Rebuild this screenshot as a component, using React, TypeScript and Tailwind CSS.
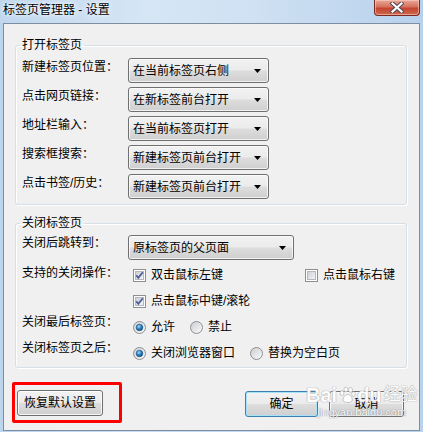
import React from "react";

const Arrow = () => (
  <svg width="7" height="4" viewBox="0 0 7 4" className="shrink-0">
    <path d="M0 0 H7 L3.5 4 Z" fill="#000" />
  </svg>
);

const Combo = ({ text, w }: { text: string; w: string }) => (
  <div
    className={`${w} h-[25px] shrink-0 flex items-center justify-between pl-[4px] pr-[7px] rounded-[3px] border border-[#707070] bg-[linear-gradient(#f2f2f2_0%,#ebebeb_48%,#dddddd_52%,#cfcfcf_100%)] shadow-[inset_0_0_0_1px_rgba(255,255,255,0.7)]`}
  >
    <span className="text-[12px] leading-[16px] text-black">{text}</span>
    <Arrow />
  </div>
);

const Check = ({ checked }: { checked: boolean }) => (
  <svg width="13" height="13" viewBox="0 0 13 13" className="shrink-0">
    <defs>
      <linearGradient id="cbg" x1="0" y1="0" x2="1" y2="1">
        <stop offset="0" stopColor="#cbcfd5" />
        <stop offset="1" stopColor="#f6f6f6" />
      </linearGradient>
    </defs>
    <rect x="0.5" y="0.5" width="12" height="12" fill="#fff" stroke="#8e8f8f" />
    <rect x="2.5" y="2.5" width="8" height="8" fill="url(#cbg)" stroke="#b4b8be" />
    {checked && (
      <path d="M3.2 6.2 L5.3 8.8 L9.8 3.2" fill="none" stroke="#4a5f97" strokeWidth="1.8" />
    )}
  </svg>
);

const Radio = ({ on }: { on: boolean }) => (
  <svg width="13" height="13" viewBox="0 0 13 13" className="shrink-0">
    <defs>
      <linearGradient id="rbg" x1="0" y1="0" x2="1" y2="1">
        <stop offset="0" stopColor="#c9cdd3" />
        <stop offset="1" stopColor="#fbfbfb" />
      </linearGradient>
      <radialGradient id="rdot" cx="0.4" cy="0.35" r="0.7">
        <stop offset="0" stopColor="#a6dcf7" />
        <stop offset="0.5" stopColor="#2d86c5" />
        <stop offset="1" stopColor="#0d3f74" />
      </radialGradient>
    </defs>
    <circle cx="6.5" cy="6.5" r="6" fill="url(#rbg)" stroke="#8e8f8f" />
    {on && <circle cx="6.5" cy="6.5" r="3.3" fill="url(#rdot)" stroke="#1c4f86" strokeWidth="0.6" />}
  </svg>
);

const Btn = ({ text, w, def }: { text: string; w: string; def?: boolean }) => (
  <div
    className={`${w} h-[26px] flex items-center justify-center rounded-[3px] border ${
      def
        ? "border-[#3c7fb1] shadow-[inset_0_0_0_1px_#a8e2f9]"
        : "border-[#707070] shadow-[inset_0_0_0_1px_rgba(255,255,255,0.8)]"
    } bg-[linear-gradient(#f2f2f2_0%,#ebebeb_48%,#dddddd_52%,#cfcfcf_100%)] text-[12px] leading-[16px] text-black`}
  >
    {text}
  </div>
);

const Label = ({ text, pt }: { text: string; pt?: string }) => (
  <div className={`w-[106px] shrink-0 text-[12px] leading-[16px] text-black ${pt ?? "pt-[1px]"}`}>{text}</div>
);

const groupCls =
  "border border-[#d5dfe5] rounded-[3px] shadow-[inset_1px_1px_0_#fff,1px_1px_0_#fff] pl-[6px] pr-[6px] m-0 min-w-0";
const legendCls = "text-[12px] leading-[16px] text-black px-[2px] -ml-[2px]";

export default function App() {
  const rows1: [string, string][] = [
    ["新建标签页位置：", "在当前标签页右侧"],
    ["点击网页链接：", "在新标签前台打开"],
    ["地址栏输入：", "在当前标签页打开"],
    ["搜索框搜索：", "新建标签页前台打开"],
    ["点击书签/历史：", "新建标签页前台打开"],
  ];
  return (
    <div className="relative w-[423px] h-[432px] overflow-hidden bg-[linear-gradient(90deg,#bcd4ec_0%,#c9dcf1_30%,#c2d8ef_60%,#b9d2ec_100%)] font-['Liberation_Sans','Noto_Sans_CJK_SC',sans-serif] flex flex-col">
      {/* title bar */}
      <div className="h-[23px] shrink-0 flex items-start justify-between bg-[linear-gradient(90deg,#c0d7ee_0%,#d6e6f5_35%,#cfe1f3_60%,#b7d1ec_100%)]">
        <div className="pl-[3px] pt-[2px] text-[12px] leading-[16px] text-black [text-shadow:0_0_6px_#fff,0_0_3px_#fff]">
          标签页管理器 - 设置
        </div>
        <div className="mr-[3px] w-[46px] h-[16px] rounded-b-[4px] border border-t-0 border-[#7a2a22] bg-[linear-gradient(#eaa797_0%,#d7725f_45%,#c4432f_55%,#cf6a4f_100%)] flex items-center justify-center shadow-[inset_0_0_0_1px_rgba(255,220,210,0.5)]">
          <svg width="14" height="11" viewBox="0 0 14 11">
            <path d="M2.5 1.5 L11.5 9.5 M11.5 1.5 L2.5 9.5" stroke="#4b4b55" strokeWidth="4.2" strokeLinecap="square" />
            <path d="M2.5 1.5 L11.5 9.5 M11.5 1.5 L2.5 9.5" stroke="#fff" strokeWidth="2.2" strokeLinecap="square" />
          </svg>
        </div>
      </div>

      {/* client panel */}
      <div className="mx-[3px] h-[408px] shrink-0 border border-[#7d8ea3] bg-[#f0f0f0] flex flex-col pl-[11px] pr-[12px] pt-[13px]">
        <fieldset className={`${groupCls} pt-[5px] pb-[5px]`}>
          <legend className={legendCls}>打开标签页</legend>
          <div className="flex flex-col gap-[4px]">
            {rows1.map(([l, v]) => (
              <div key={l} className="flex items-start">
                <Label text={l} />
                <Combo text={v} w="w-[141px]" />
              </div>
            ))}
          </div>
        </fieldset>

        <fieldset className={`${groupCls} mt-[10px] pt-[4px] pb-[1px]`}>
          <legend className={legendCls}>关闭标签页</legend>
          <div className="flex items-start">
            <Label text="关闭后跳转到：" pt="pt-0" />
            <Combo text="原标签页的父页面" w="w-[166px]" />
          </div>
          <div className="mt-[2px] flex flex-col">
            <div className="h-[26px] flex items-start">
              <Label text="支持的关闭操作：" pt="pt-[3px]" />
              <div className="flex items-center h-[26px] pl-[5px]">
                <div className="w-[172px] flex items-center gap-[5px]">
                  <Check checked />
                  <span className="text-[12px] leading-[16px] text-black">双击鼠标左键</span>
                </div>
                <div className="flex items-center gap-[5px]">
                  <Check checked={false} />
                  <span className="text-[12px] leading-[16px] text-black">点击鼠标右键</span>
                </div>
              </div>
            </div>
            <div className="h-[26px] flex items-start">
              <div className="w-[106px] shrink-0" />
              <div className="flex items-center h-[26px] pl-[5px] gap-[5px]">
                <Check checked />
                <span className="text-[12px] leading-[16px] text-black">点击鼠标中键/滚轮</span>
              </div>
            </div>
            <div className="h-[26px] flex items-start">
              <Label text="关闭最后标签页：" pt="pt-0" />
              <div className="flex items-center h-[26px] pl-[5px]">
                <div className="w-[57px] flex items-center gap-[5px]">
                  <Radio on />
                  <span className="text-[12px] leading-[16px] text-black">允许</span>
                </div>
                <div className="flex items-center gap-[5px]">
                  <Radio on={false} />
                  <span className="text-[12px] leading-[16px] text-black">禁止</span>
                </div>
              </div>
            </div>
            <div className="h-[26px] flex items-start">
              <Label text="关闭标签页之后：" pt="pt-0" />
              <div className="flex items-center h-[26px] pl-[5px]">
                <div className="w-[117px] flex items-center gap-[5px]">
                  <Radio on />
                  <span className="text-[12px] leading-[16px] text-black">关闭浏览器窗口</span>
                </div>
                <div className="flex items-center gap-[5px]">
                  <Radio on={false} />
                  <span className="text-[12px] leading-[16px] text-black">替换为空白页</span>
                </div>
              </div>
            </div>
          </div>
        </fieldset>

        <div className="mt-[22px] flex items-start pl-[2px] pr-[3px]">
          <Btn text="恢复默认设置" w="w-[86px]" />
          <div className="flex-1" />
          <div className="mt-[1px] flex gap-[11px]">
            <Btn text="确定" w="w-[73px]" def />
            <Btn text="取消" w="w-[75px]" />
          </div>
        </div>
      </div>

      {/* red annotation box */}
      <div className="absolute left-[12px] top-[382px] w-[110px] h-[41px] border-[3px] border-[#f00] rounded-[2px] pointer-events-none" />

      {/* watermark */}
      <div className="absolute left-[306px] top-[384px] pointer-events-none flex flex-col items-center opacity-90">
        <div className="flex items-center text-[20px] leading-[22px] font-bold text-white [text-shadow:0_0_1px_#999,0_0_1px_#999]">
          <span>Bai</span>
          <svg width="18" height="18" viewBox="0 0 18 18" className="mx-[1px]">
            <g fill="#fff" stroke="#aaa" strokeWidth="0.7">
              <ellipse cx="4" cy="7" rx="2" ry="2.5" />
              <ellipse cx="8" cy="3.5" rx="2" ry="2.5" />
              <ellipse cx="12.5" cy="4" rx="2" ry="2.5" />
              <ellipse cx="15.5" cy="8" rx="1.8" ry="2.3" />
              <path d="M5 15 C5 10 8 8.5 10 8.5 C12 8.5 15 11 14 15 C13 17 7 17 5 15 Z" />
            </g>
          </svg>
          <span>du</span>
          <span className="ml-[2px] text-[17px] font-normal">经验</span>
        </div>
        <div className="text-[11px] leading-[13px] text-white [text-shadow:0_0_1px_#888,0_0_1px_#888]">jingyan.baidu.com</div>
      </div>
    </div>
  );
}
